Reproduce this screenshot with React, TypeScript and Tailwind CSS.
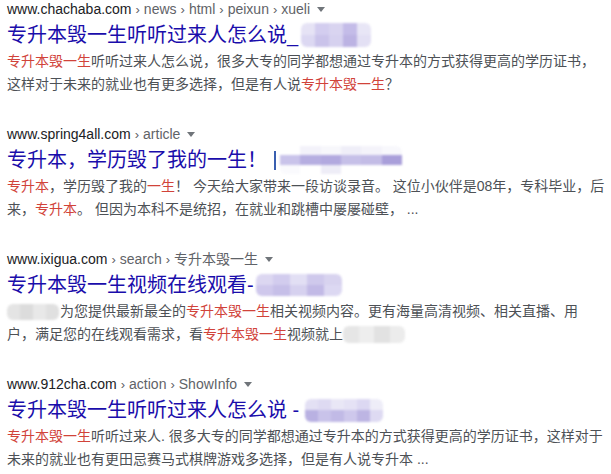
import React from "react";

const FONT = { fontFamily: '"Liberation Sans", "Noto Sans CJK SC", sans-serif' };

function Mosaic({ rows, w, h, className = "" }: { rows: string[][]; w: number; h: number; className?: string }) {
  return (
    <span
      className={"inline-flex shrink-0 flex-col overflow-hidden rounded-[6px] blur-[1px] " + className}
      style={{ width: w, height: h }}
    >
      {rows.map((r, i) => (
        <span key={i} className="flex flex-1">
          {r.map((c, j) => (
            <span key={j} className="flex-1" style={{ background: c }} />
          ))}
        </span>
      ))}
    </span>
  );
}

function Tri() {
  return (
    <span className="ml-[7px] inline-block h-0 w-0 border-x-[4px] border-t-[5px] border-x-transparent border-t-[#70757a] align-middle" />
  );
}

function Url({ host, parts }: { host: string; parts: string[] }) {
  return (
    <div className="flex h-[16px] items-center text-[14px] leading-[16px] whitespace-nowrap">
      <span className="text-[#202124]">{host}</span>
      {parts.map((p, i) => (
        <span key={i} className="text-[#5f6368]">
          <span className="mx-[4px] text-[13px]">›</span>
          {p}
        </span>
      ))}
      <Tri />
    </div>
  );
}

const R = ({ children }: { children: React.ReactNode }) => <span className="text-[#d1433a]">{children}</span>;

const SNIP = "mt-[3px] text-[14px] leading-[23px] text-[#4d5156] whitespace-nowrap";
const TITLE = "mt-[6px] flex h-[24px] items-center text-[20px] leading-[24px] text-[#1a0dab] whitespace-nowrap";

export default function App() {
  return (
    <div className="flex min-h-[474px] w-[611px] flex-col gap-[30px] overflow-hidden bg-white pl-[7px] pt-[1px]" style={FONT}>
      {/* Result 1 */}
      <div>
        <Url host="www.chachaba.com" parts={["news", "html", "peixun", "xueli"]} />
        <div className={TITLE}>
          <span>专升本毁一生听听过来人怎么说_</span>
          <Mosaic
            w={70}
            h={24}
            className="ml-[3px]"
            rows={[
              ["#e6e3f5", "#d3cdef", "#d9d4f0", "#c4bce8", "#e8e6f6"],
              ["#dcd8f2", "#cac3ea", "#d6d1ef", "#bcb3e3", "#e3e0f4"],
            ]}
          />
        </div>
        <div className={SNIP}>
          <R>专升本毁一生</R>听听过来人怎么说，很多大专的同学都想通过专升本的方式获得更高的学历证书，
          <br />
          这样对于未来的就业也有更多选择，但是有人说<R>专升本毁一生</R>？
        </div>
      </div>

      {/* Result 2 */}
      <div>
        <Url host="www.spring4all.com" parts={["article"]} />
        <div className={TITLE}>
          <span>专升本，学历毁了我的一生！</span>
          <span className="ml-[7px] inline-block h-[19px] w-[2px] bg-[#3a5fb0]" />
          <Mosaic
            w={122}
            h={28}
            className="ml-[4px]"
            rows={[
              ["#ffffff", "#f3f2fa", "#f7f7fb", "#efeef8", "#f4f3fa", "#f8f8fc"],
              ["#c9c3ea", "#b6aee1", "#b2a9df", "#c6c0e8", "#c3bce6", "#a99fda"],
              ["#fafafd", "#ffffff", "#eeedf7", "#ffffff", "#ffffff", "#ffffff"],
            ]}
          />
        </div>
        <div className={SNIP}>
          <R>专升本</R>，学历毁了我的<R>一生</R>！ 今天给大家带来一段访谈录音。 这位小伙伴是08年，专科毕业，后
          <br />
          来，<R>专升本</R>。 但因为本科不是统招，在就业和跳槽中屡屡碰壁， ...
        </div>
      </div>

      {/* Result 3 */}
      <div>
        <Url host="www.ixigua.com" parts={["search", "专升本毁一生"]} />
        <div className={TITLE}>
          <span>专升本毁一生视频在线观看-</span>
          <Mosaic
            w={86}
            h={22}
            className="ml-[2px]"
            rows={[
              ["#dcd7f1", "#d2ccee", "#e2dff4", "#cfc9ec", "#d8d3ef"],
              ["#cfc8ec", "#c6bfe8", "#d6d1ef", "#c2bae6", "#dcd8f2"],
            ]}
          />
        </div>
        <div className={SNIP}>
          <span className="flex items-center">
            <Mosaic w={52} h={16} className="mr-[1px]" rows={[["#e4e4e4", "#dcdcdc", "#e8e8e8", "#e0e0e0"]]} />
            <span>为您提供最新最全的<R>专升本毁一生</R>相关视频内容。更有海量高清视频、相关直播、用</span>
          </span>
          <span className="flex items-center">
            <span>户，满足您的在线观看需求，看<R>专升本毁一生</R>视频就上</span>
            <Mosaic w={62} h={17} rows={[["#e6e6e6", "#eeeeee", "#e2e2e2", "#ececec"]]} />
          </span>
        </div>
      </div>

      {/* Result 4 */}
      <div>
        <Url host="www.912cha.com" parts={["action", "ShowInfo"]} />
        <div className={TITLE}>
          <span>专升本毁一生听听过来人怎么说 -</span>
          <Mosaic
            w={78}
            h={23}
            className="ml-[6px]"
            rows={[
              ["#e3e0f4", "#dedaf2", "#e9e7f6", "#e5e2f5", "#dcd8f2", "#eeedf8"],
              ["#b9b1e2", "#c9c3ea", "#c1bae6", "#cec8ec", "#bdb5e3", "#dedaf2"],
            ]}
          />
        </div>
        <div className={SNIP}>
          <R>专升本毁一生</R>听听过来人. 很多大专的同学都想通过专升本的方式获得更高的学历证书，这样对于
          <br />
          未来的就业也有更田忌赛马式棋牌游戏多选择，但是有人说专升本 ...
        </div>
      </div>
    </div>
  );
}
